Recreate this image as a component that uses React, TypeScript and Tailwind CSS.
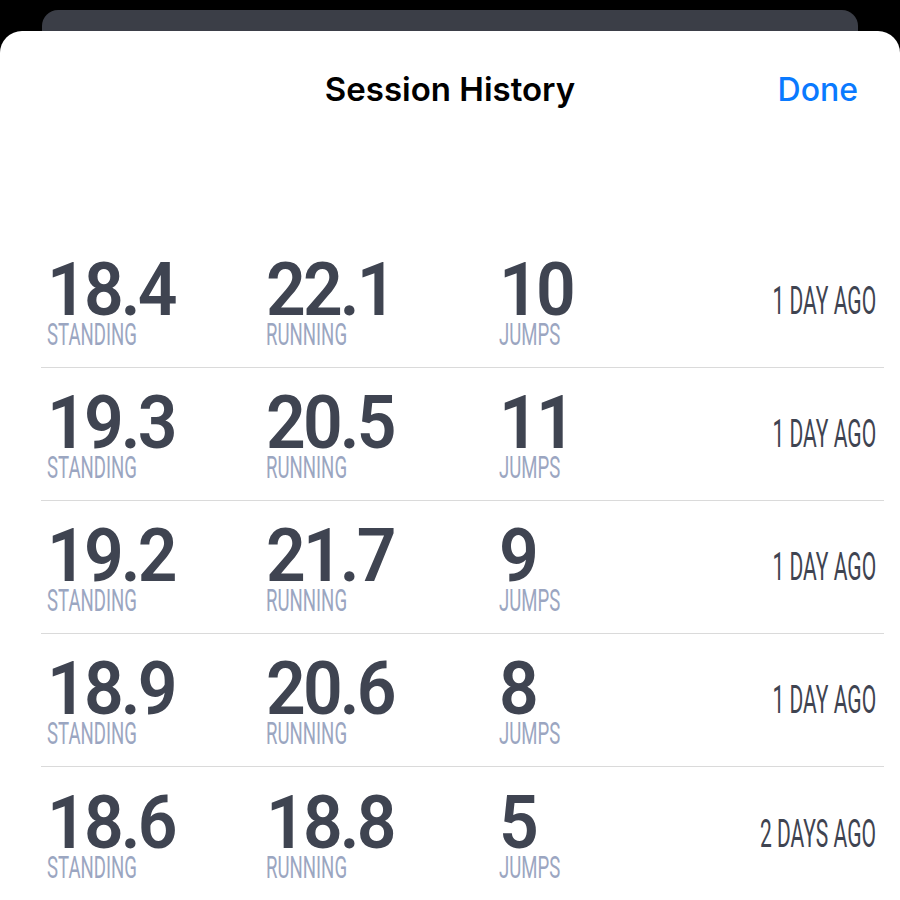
import React from "react";

type Session = {
  standing: string;
  running: string;
  jumps: string;
  when: string;
};

const sessions: Session[] = [
  { standing: "18.4", running: "22.1", jumps: "10", when: "1 DAY AGO" },
  { standing: "19.3", running: "20.5", jumps: "11", when: "1 DAY AGO" },
  { standing: "19.2", running: "21.7", jumps: "9", when: "1 DAY AGO" },
  { standing: "18.9", running: "20.6", jumps: "8", when: "1 DAY AGO" },
  { standing: "18.6", running: "18.8", jumps: "5", when: "2 DAYS AGO" },
];

const roboto = { fontFamily: 'Roboto, "Liberation Sans", sans-serif' };

function Stat({ value, label, width }: { value: string; label: string; width: string }) {
  return (
    <div className={`flex flex-col ${width}`}>
      <span
        className="inline-block origin-left scale-x-[0.94] text-[74px] font-semibold leading-[70px] tracking-[-3px] whitespace-nowrap text-[#3f4451]"
        style={roboto}
      >
        {value}
      </span>
      <span
        className="-mt-[2px] inline-block origin-left scale-x-[0.6] text-[31px] leading-[24px] whitespace-nowrap text-[#9ba6c1]"
        style={roboto}
      >
        {label}
      </span>
    </div>
  );
}

export default function App() {
  return (
    <div className="h-[900px] w-[900px] overflow-hidden bg-black">
      <div className="mx-[42px] mt-[10px] h-[40px] rounded-t-[16px] bg-[#3b3e47]" />
      <div className="-mt-[19px] h-[880px] rounded-t-[22px] bg-white">
        <header className="relative flex h-[118px] items-center justify-center">
          <h1
            className="text-[33px] font-semibold text-black"
            style={{ fontFamily: 'Inter, "Noto Sans", sans-serif' }}
          >
            Session History
          </h1>
          <button
            type="button"
            className="absolute right-[42px] top-1/2 -translate-y-1/2 text-[32px] font-medium text-[#0a7aff]"
            style={{ fontFamily: 'Inter, "Noto Sans", sans-serif' }}
          >
            Done
          </button>
        </header>
        <div className="h-[86px]" />
        <ul className="ml-[41px] mr-[16px]">
          {sessions.map((s, i) => (
            <li
              key={i}
              className="flex h-[133px] items-center border-b border-[#dadada] pl-[6px] pr-[8px] last:border-b-0"
            >
              <Stat value={s.standing} label="STANDING" width="w-[219px]" />
              <Stat value={s.running} label="RUNNING" width="w-[233px]" />
              <Stat value={s.jumps} label="JUMPS" width="w-[150px]" />
              <span
                className="ml-auto inline-block origin-right scale-x-[0.54] text-[39px] leading-[40px] whitespace-nowrap text-[#3f4451]"
                style={roboto}
              >
                {s.when}
              </span>
            </li>
          ))}
        </ul>
      </div>
    </div>
  );
}
